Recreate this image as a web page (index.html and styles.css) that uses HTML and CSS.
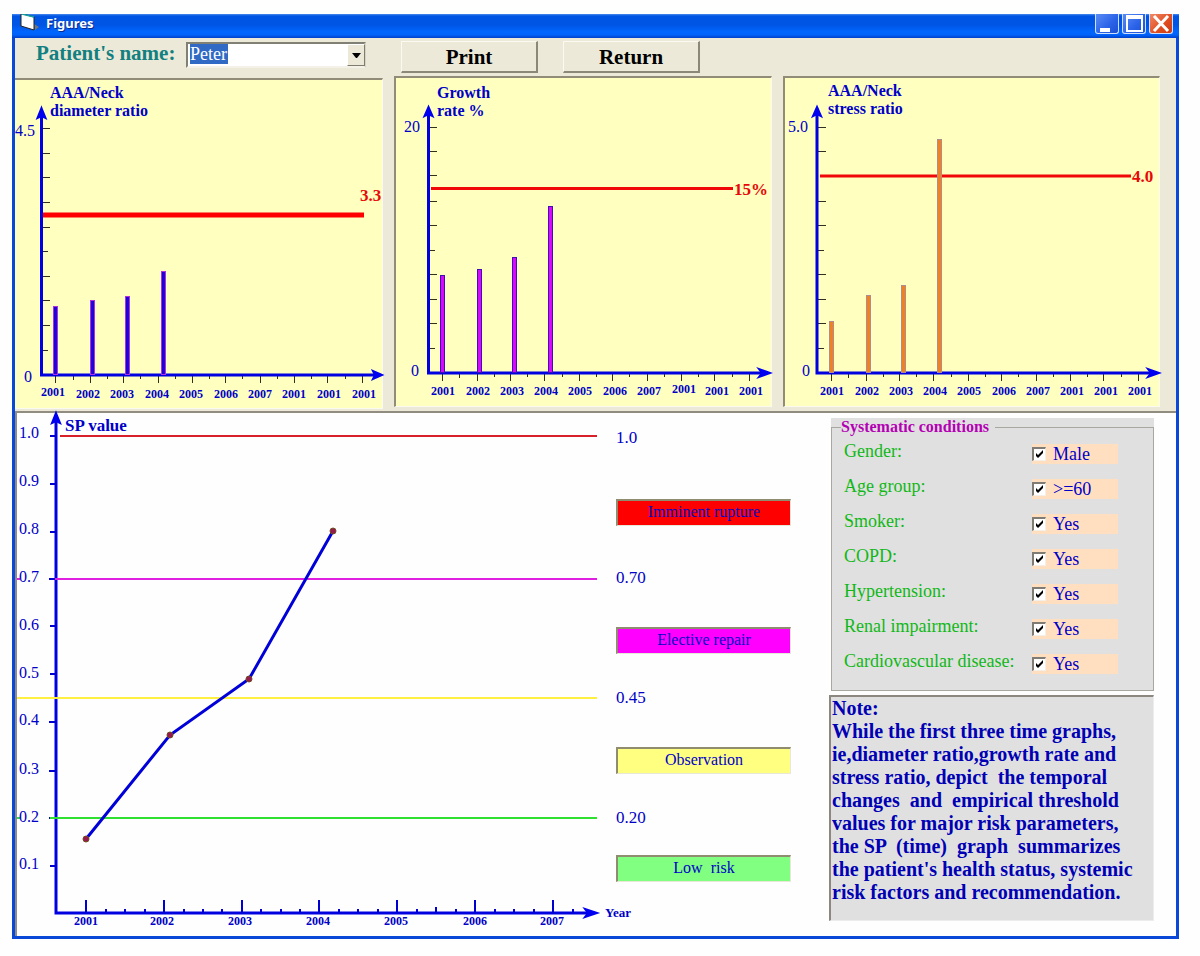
FILE: index.html
```html
<!DOCTYPE html>
<html lang="en">
<head>
<meta charset="utf-8">
<title>Figures</title>
<link rel="stylesheet" href="styles.css">
</head>
<body>
<div class="window">
  <header class="titlebar">
    <svg class="app-icon" width="20" height="18" viewBox="0 0 20 18" aria-hidden="true">
      <path d="M14 10l5 3-4 3z" fill="#777"/>
      <path d="M1 0v12l13 4V3L3 0z" fill="#fff" stroke="#222" stroke-width="1"/>
      <path d="M2 0l12 3" stroke="#19a0a0" stroke-width="1.4"/>
    </svg>
    <h1 class="title">Figures</h1>
    <div class="controls">
      <button class="ctl" type="button" aria-label="Minimize"><svg width="21" height="18" viewBox="0 0 21 18"><path d="M4 13h10v4H4z" fill="#fff"/></svg></button>
      <button class="ctl" type="button" aria-label="Maximize"><svg width="21" height="18" viewBox="0 0 21 18"><path d="M3 0h17v17H3zM5 4v11h13V4z" fill="#fff" fill-rule="evenodd"/></svg></button>
      <button class="ctl ctl-close" type="button" aria-label="Close"><svg width="21" height="18" viewBox="0 0 21 18"><path d="M4 1l14 15M18 1L4 16" stroke="#fff" stroke-width="3"/></svg></button>
    </div>
  </header>

  <div class="toolbar">
    <label class="patient-label" for="patient">Patient's name:</label>
    <div class="combo">
      <select id="patient" class="combo-select"><option>Peter</option></select>
      <span class="combo-arrow"><svg width="9" height="5" viewBox="0 0 9 5"><path d="M0 0h9L5 5H4z" fill="#000"/></svg></span>
    </div>
    <button class="tool-button" type="button">Print</button>
    <button class="tool-button" type="button">Return</button>
  </div>

  <section class="charts">
    <div class="chart chart-first">
      <svg viewBox="15 80 367 328" role="img" aria-label="AAA/Neck diameter ratio">
        <g class="chart-title"><text x="50" y="98">AAA/Neck</text><text x="50" y="116">diameter ratio</text></g>
        <path class="tick" d="M42 128.5h8M42 153.5h8M42 177.5h8M42 202.5h8M42 227.5h8M42 251.5h6M42 276.5h8M42 300.5h8M42 325.5h8M42 350.5h6"/>
        <path class="tick" d="M55.5 376v7M90.5 376v7M123.5 376v7M158.5 376v7M192.5 376v7M225.5 376v7M260.5 376v7M294.5 376v7M327.5 376v7M362.5 376v7M73.5 376v4M107.5 376v3M140.5 376v3M175.5 376v3M209.5 376v3M242.5 376v3M277.5 376v3M311.5 376v3M345.5 376v3"/>
        <path class="axis" d="M41.5 115V375H374"/>
        <path class="arrow" d="M41.5 108l4 10-4-2-4 2zM382 375l-9-4 2 4-2 4z"/>
        <path class="limit limit-thick" d="M43 215H364"/>
        <g class="bars-blue"><rect x="53.5" y="306.5" width="4" height="68"/><rect x="90.5" y="300.5" width="4" height="74"/><rect x="125.5" y="296.5" width="4" height="78"/><rect x="161.5" y="271.5" width="4" height="103"/></g>
        <text class="limit-text" x="360" y="201">3.3</text>
        <text class="scale" x="15" y="136">4.5</text><text class="scale" x="24" y="382">0</text>
        <g class="years"><text x="53" y="396">2001</text><text x="88" y="398">2002</text><text x="122" y="398">2003</text><text x="157" y="398">2004</text><text x="191" y="398">2005</text><text x="226" y="398">2006</text><text x="260" y="398">2007</text><text x="294" y="398">2001</text><text x="329" y="398">2001</text><text x="364" y="398">2001</text></g>
      </svg>
    </div>
    <div class="chart">
      <svg viewBox="396 78 375 328" role="img" aria-label="Growth rate percent">
        <g class="chart-title"><text x="437" y="98">Growth</text><text x="437" y="116">rate %</text></g>
        <path class="tick" d="M429 127.5h8M429 151.5h8M429 175.5h8M429 201.5h8M429 225.5h8M429 250.5h6M429 274.5h8M429 299.5h8M429 323.5h8M429 348.5h6"/>
        <path class="tick" d="M442.5 374v7M477.5 374v7M510.5 374v7M544.5 374v7M579.5 374v7M612.5 374v7M647.5 374v7M681.5 374v7M714.5 374v7M749.5 374v7M459.5 374v4M494.5 374v3M527.5 374v3M562.5 374v3M596.5 374v3M629.5 374v3M664.5 374v3M698.5 374v3M732.5 374v3"/>
        <path class="axis" d="M428.5 114V373H763"/>
        <path class="arrow" d="M428.5 107l4 9-4-2-4 2zM770 373l-11-4 3 4-3 4z"/>
        <path class="limit" d="M431 188.5H733"/>
        <g class="bars-magenta"><rect x="440.5" y="275.5" width="4" height="97"/><rect x="477.5" y="269.5" width="4" height="103"/><rect x="512.5" y="257.5" width="4" height="115"/><rect x="548.5" y="206.5" width="4" height="166"/></g>
        <text class="limit-text" x="734" y="195">15%</text>
        <text class="scale" x="404" y="132">20</text><text class="scale" x="411" y="376">0</text>
        <g class="years"><text x="443" y="395">2001</text><text x="478" y="395">2002</text><text x="512" y="395">2003</text><text x="546" y="395">2004</text><text x="580" y="395">2005</text><text x="615" y="395">2006</text><text x="649" y="395">2007</text><text x="684" y="393">2001</text><text x="717" y="395">2001</text><text x="751" y="395">2001</text></g>
      </svg>
    </div>
    <div class="chart">
      <svg viewBox="785 78 374 328" role="img" aria-label="AAA/Neck stress ratio">
        <g class="chart-title"><text x="828" y="96">AAA/Neck</text><text x="828" y="114">stress ratio</text></g>
        <path class="tick" d="M818 127.5h8M818 151.5h8M818 201.5h8M818 225.5h8M818 250.5h6M818 274.5h8M818 299.5h8M818 323.5h8M818 348.5h6"/>
        <path class="tick" d="M831.5 374v7M866.5 374v7M899.5 374v7M933.5 374v7M968.5 374v7M1001.5 374v7M1036.5 374v7M1070.5 374v7M1103.5 374v7M1138.5 374v7M848.5 374v4M883.5 374v3M916.5 374v3M951.5 374v3M985.5 374v3M1018.5 374v3M1053.5 374v3M1087.5 374v3M1121.5 374v3"/>
        <path class="axis" d="M817 114V373H1152"/>
        <path class="arrow" d="M817 107l4 9-4-2-4 2zM1159 373l-11-4 3 4-3 4z"/>
        <path class="limit" d="M820 176H1131"/>
        <g class="bars-orange"><rect x="829.5" y="321.5" width="4" height="51"/><rect x="866.5" y="295.5" width="4" height="77"/><rect x="901.5" y="285.5" width="4" height="87"/><rect x="937.5" y="139.5" width="4" height="233"/></g>
        <text class="limit-text" x="1132" y="182">4.0</text>
        <text class="scale" x="788" y="132">5.0</text><text class="scale" x="802" y="376">0</text>
        <g class="years"><text x="832" y="395">2001</text><text x="867" y="395">2002</text><text x="901" y="395">2003</text><text x="935" y="395">2004</text><text x="969" y="395">2005</text><text x="1004" y="395">2006</text><text x="1038" y="395">2007</text><text x="1072" y="395">2001</text><text x="1106" y="395">2001</text><text x="1140" y="395">2001</text></g>
      </svg>
    </div>
  </section>

  <main class="summary">
    <svg class="sp-chart" viewBox="17 413 581 523" role="img" aria-label="SP value by year">
      <path class="axis" d="M56 420V913H588"/>
      <path class="arrow" d="M56 413l4 10-4-2-4 2zM597 913l-12-4 3 4-3 4z"/>
      <path class="sp-tick" d="M50 436h6M50 484h6M50 532h6M49 579h7M50 626h6M50 674h6M49 722h7M49 771h7M49 818h7M50 866h6M86 900v13M164 900v13M242 900v13M319 900v13M397 900v13M475 900v13M553 900v13M106 909v4M125 909v4M145 909v4M184 909v4M203 909v4M222 909v4M261 909v4M281 909v4M300 909v4M339 909v4M358 909v4M378 909v4M417 909v4M436 907v6M456 909v4M495 909v4M514 909v4M534 909v4M573 909v4"/>
      <path class="level" stroke="#d82028" d="M60 436H597"/>
      <path class="level" stroke="#e020e0" d="M17 579h3M55 579H597"/>
      <path class="level" stroke="#fff040" d="M17 698H597"/>
      <path class="level" stroke="#30e030" d="M17 818h3M50 818H597"/>
      <path class="sp-line" d="M86 839L170 735L249 679L333 531"/>
      <g class="sp-dots"><circle cx="86" cy="839" r="3"/><circle cx="170" cy="735" r="3"/><circle cx="249" cy="679" r="3"/><circle cx="333" cy="531" r="3"/></g>
      <text class="sp-title" x="65" y="431">SP value</text>
      <g class="scale"><text x="19" y="438">1.0</text><text x="19" y="486">0.9</text><text x="19" y="534">0.8</text><text x="19" y="582">0.7</text><text x="19" y="630">0.6</text><text x="19" y="678">0.5</text><text x="19" y="725">0.4</text><text x="19" y="774">0.3</text><text x="19" y="822">0.2</text><text x="19" y="869">0.1</text></g>
      <g class="years"><text x="86" y="925">2001</text><text x="162" y="925">2002</text><text x="240" y="925">2003</text><text x="318" y="925">2004</text><text x="396" y="925">2005</text><text x="475" y="925">2006</text><text x="552" y="925">2007</text></g>
      <text class="year-title" x="605" y="917">Year</text>
    </svg>

    <div class="zones">
      <div class="zone zone-top"><span class="zone-value">1.0</span><span class="band band-red">Imminent rupture</span></div>
      <div class="zone"><span class="zone-value">0.70</span><span class="band band-magenta">Elective repair</span></div>
      <div class="zone"><span class="zone-value">0.45</span><span class="band band-yellow">Observation</span></div>
      <div class="zone zone-low"><span class="zone-value">0.20</span><span class="band band-green">Low&nbsp; risk</span></div>
    </div>

    <aside class="side">
      <div class="conditions">
        <fieldset class="group">
          <legend class="group-title">Systematic conditions</legend>
          <div class="row"><span class="name" id="c1">Gender:</span><label class="check"><input type="checkbox" checked aria-describedby="c1">Male</label></div>
          <div class="row"><span class="name" id="c2">Age group:</span><label class="check"><input type="checkbox" checked aria-describedby="c2">&gt;=60</label></div>
          <div class="row"><span class="name" id="c3">Smoker:</span><label class="check"><input type="checkbox" checked aria-describedby="c3">Yes</label></div>
          <div class="row"><span class="name" id="c4">COPD:</span><label class="check"><input type="checkbox" checked aria-describedby="c4">Yes</label></div>
          <div class="row"><span class="name" id="c5">Hypertension:</span><label class="check"><input type="checkbox" checked aria-describedby="c5">Yes</label></div>
          <div class="row"><span class="name" id="c6">Renal impairment:</span><label class="check"><input type="checkbox" checked aria-describedby="c6">Yes</label></div>
          <div class="row"><span class="name" id="c7">Cardiovascular disease:</span><label class="check"><input type="checkbox" checked aria-describedby="c7">Yes</label></div>
        </fieldset>
      </div>
      <p class="note">Note:
While the first three time graphs,
ie,diameter ratio,growth rate and
stress ratio, depict  the temporal
changes  and  empirical threshold
values for major risk parameters,
the SP  (time)  graph  summarizes
the patient's health status, systemic
risk factors and recommendation.</p>
    </aside>
  </main>
</div>
</body>
</html>
```

FILE: styles.css
```css
* { box-sizing: border-box; }

body {
  margin: 0;
  padding: 14px 21px 17px 12px;
  background: #fefefe;
  font-family: "Liberation Serif", "Times New Roman", serif;
  color: #0000c8;
}

.window {
  border: solid #0a48d8;
  border-width: 0 3px 3px;
  background: #fefefe;
}

/* Title bar */
.titlebar {
  display: flex;
  align-items: flex-start;
  height: 24px;
  margin: 0 -3px;
  padding: 0 6px 0 8px;
  background: linear-gradient(#4a8cf0 0, #0054e3 2px, #0055e5 11px, #0066ff 18px, #0062f8 21px, #003fc8 24px);
}

.title {
  flex: 1;
  margin: 0 0 0 6px;
  font: bold 13px/18px "Noto Sans", "Open Sans", sans-serif;
  color: #fff;
  text-shadow: 1px 1px #0a2a90;
}

.controls { display: flex; gap: 3px; }

.ctl {
  width: 24px;
  height: 20px;
  padding: 0;
  border: 1px solid #cfe0ff;
  border-top: 0;
  border-radius: 0 0 3px 3px;
  background: linear-gradient(135deg, #5a8cf4, #2a62e8 60%, #1c50d0);
}

.ctl svg { display: block; }
.ctl-close { background: linear-gradient(135deg, #f08a68, #e04c20 60%, #c83c14); }

/* Toolbar */
.toolbar {
  display: flex;
  align-items: flex-start;
  height: 38px;
  padding: 3px 0 0 21px;
  background: #ece9d8;
}

.patient-label {
  width: 150px;
  font-weight: bold;
  font-size: 21px;
  line-height: 25px;
  color: #128080;
}

.combo {
  position: relative;
  width: 180px;
  height: 26px;
  margin: 1px 35px 0 0;
}

.combo-select {
  width: 100%;
  height: 100%;
  padding: 0 24px 2px 2px;
  border: 2px solid;
  border-color: #808074 #d8d4c4 #f4f2e8 #808074;
  border-radius: 0;
  appearance: none;
  background: linear-gradient(#316ac5, #316ac5) 2px 0 / 38px 20px no-repeat #fff;
  color: #fff;
  font: 18px/20px "Liberation Serif", serif;
}

.combo-arrow {
  position: absolute;
  top: 2px;
  right: 1px;
  bottom: 2px;
  display: flex;
  align-items: center;
  justify-content: center;
  width: 18px;
  border: 1px solid;
  border-color: #fff #807c70 #807c70 #fff;
  background: #ece9d8;
  pointer-events: none;
}

.tool-button {
  width: 137px;
  height: 32px;
  margin-right: 25px;
  padding: 0;
  border: solid;
  border-width: 1px 2px 2px 1px;
  border-color: #fbfaf2 #8c8878 #8c8878 #fbfaf2;
  border-radius: 0;
  appearance: none;
  background: #ece9d8;
  color: #000;
  font: bold 21px/24px "Liberation Serif", serif;
}

/* Ratio charts */
.charts {
  display: grid;
  grid-template-columns: 368fr 378fr 377fr;
  gap: 11px;
  padding: 0 16px 2px 0;
  background: #ece9d8;
}

.chart {
  align-self: start;
  border: solid;
  border-width: 2px 1px 1px 2px;
  border-color: #908c78 #fbfaf0 #fbfaf0 #908c78;
  background: #ffffc0;
}

.chart-first { margin-top: 2px; border-left-width: 0; }
.chart svg, .sp-chart { display: block; width: 100%; height: auto; overflow: visible; }

svg text { fill: #0000c8; }
.chart-title { font-weight: bold; font-size: 16px; }
.scale { font-size: 16px; }
.years { font-weight: bold; font-size: 12px; text-anchor: middle; }
svg .limit-text { fill: #e80808; font-weight: bold; font-size: 17px; }
.tick { stroke: #303020; stroke-width: 1; }
.axis { fill: none; stroke: #0000e0; stroke-width: 3; }
.arrow { fill: #0000f0; stroke: #0000f0; stroke-width: 2; }
.limit { stroke: #f00808; stroke-width: 3; }
.limit-thick { stroke: #ff0000; stroke-width: 5; }
.bars-blue { fill: #2000d8; stroke: #b030e0; }
.bars-magenta { fill: #d808ff; stroke: #4010b0; }
.bars-orange { fill: #f08020; stroke: #b08c90; }
.bars-blue, .bars-magenta, .bars-orange { shape-rendering: crispEdges; }

/* Summary area */
.summary {
  display: grid;
  grid-template-columns: 581fr 193fr 363fr;
  align-items: start;
  padding-right: 22px;
  border: solid #908c80;
  border-width: 2px 0 0 2px;
}

.sp-tick { stroke: #0000d0; stroke-width: 2; }
.level { stroke-width: 2; }
.sp-line { fill: none; stroke: #0000d8; stroke-width: 3; }
.sp-dots { fill: #981850; stroke: #705020; stroke-width: 1; }
.sp-title { font-weight: bold; font-size: 17px; }
.year-title { font-weight: bold; font-size: 13px; }

.zones { padding: 16px 0 0 18px; }
.zone { display: flex; flex-direction: column; gap: 40px; height: 120px; }
.zone-top { gap: 52px; height: 140px; }
.zone-low { gap: 28px; }
.zone-value { font-size: 17px; line-height: 18px; }

.band {
  height: 27px;
  border: solid;
  border-width: 2px 1px 1px 2px;
  border-color: #908c70 #e8e8d8 #e8e8d8 #908c70;
  font-size: 16px;
  line-height: 22px;
  text-align: center;
}

.band-red { background: #ff0000; }
.band-magenta { background: #ff00ff; }
.band-yellow { background: #ffff80; }
.band-green { background: #80ff80; }

.side { padding: 5px 0 0 38px; }

.conditions {
  margin: 0 0 4px 2px;
  background: #e0e0e0;
}

.group {
  height: 273px;
  margin: 0;
  padding: 0 12px 0 12px;
  border: 1px solid #a8a8a0;
}

.group-title {
  margin-left: -3px;
  padding: 0 6px 0 0;
  font-weight: bold;
  font-size: 16px;
  line-height: 18px;
  color: #b400b4;
}

.row {
  display: grid;
  grid-template-columns: 188px 86px;
  align-items: center;
  height: 35px;
  font-size: 18px;
  line-height: 20px;
}

.name { padding-bottom: 5px; color: #10b818; }

.check {
  display: flex;
  align-items: center;
  gap: 7px;
  height: 20px;
  background: #ffdfc0;
}

.check input {
  width: 14px;
  height: 14px;
  margin: 0;
  border: solid;
  border-width: 2px 1px 1px 2px;
  border-color: #807c74 #f4f0e8 #f4f0e8 #807c74;
  appearance: none;
  background: #fff;
}

.check input:checked {
  background: url("data:image/svg+xml,%3Csvg xmlns='http://www.w3.org/2000/svg' viewBox='0 0 11 11'%3E%3Cpath d='M2 4v3l2 2 5-5V1L4 6z' fill='%23000'/%3E%3C/svg%3E") center / 11px 11px no-repeat #fff;
}

.note {
  min-height: 226px;
  margin: 0;
  padding: 0 0 0 1px;
  border: solid;
  border-width: 2px 1px 1px 2px;
  border-color: #8c8880 #ececec #ececec #8c8880;
  background: #e0e0e0;
  font-weight: bold;
  font-size: 20px;
  line-height: 23px;
  white-space: pre;
  color: #0000b4;
}
```
